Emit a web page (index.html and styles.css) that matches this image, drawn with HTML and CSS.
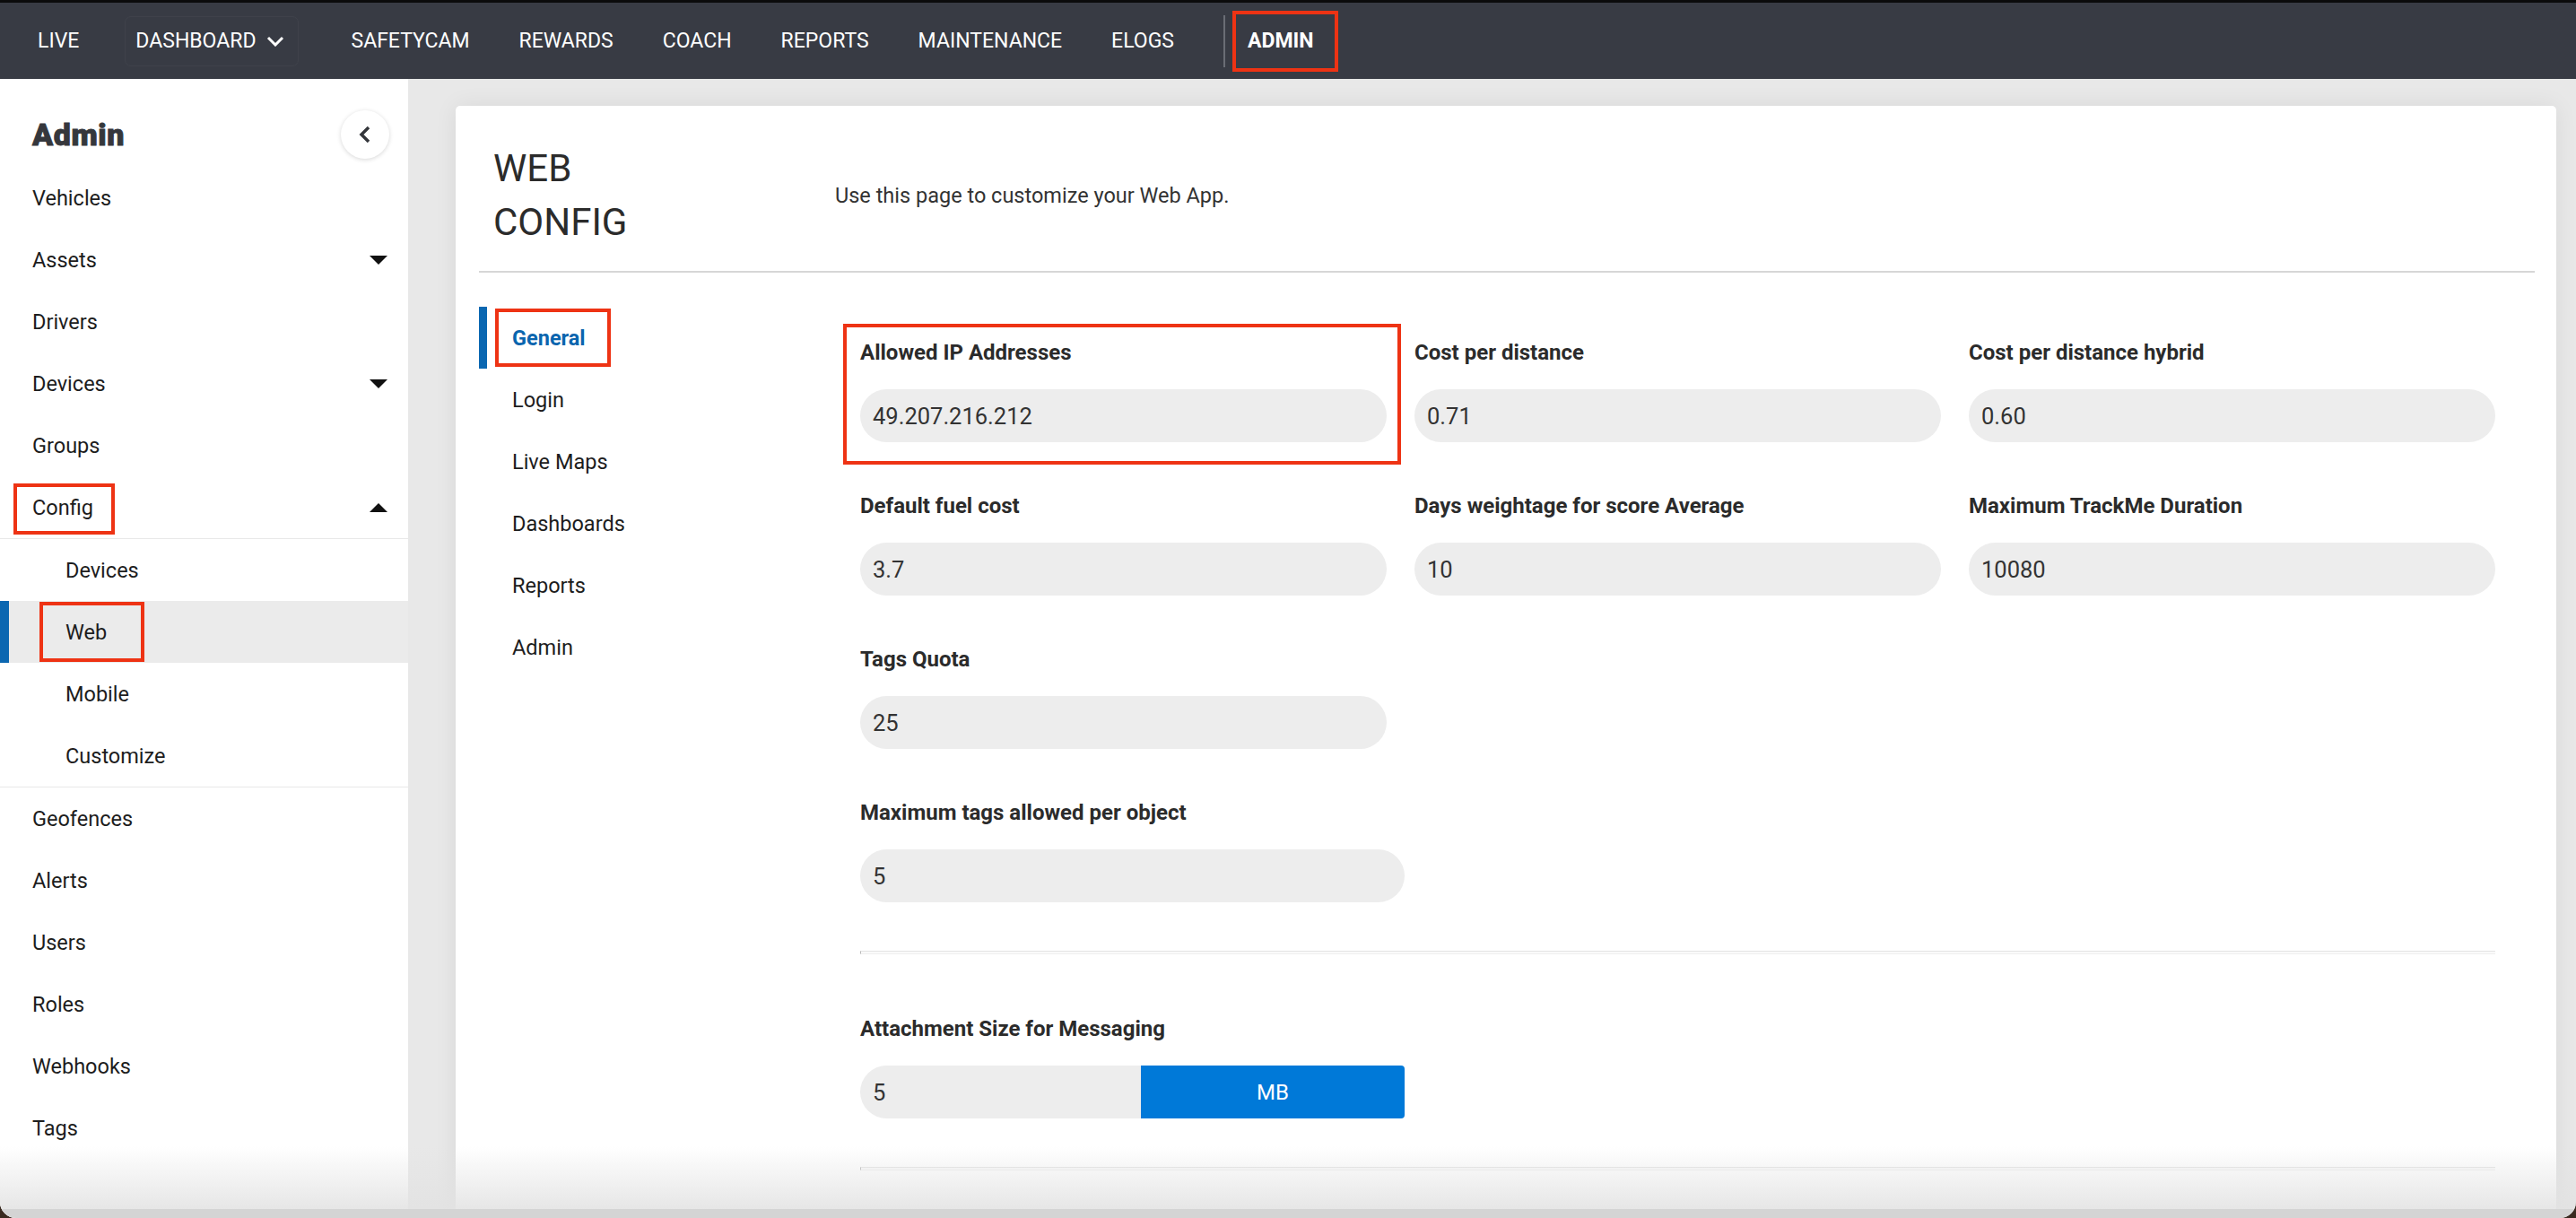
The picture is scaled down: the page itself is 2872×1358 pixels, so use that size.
FILE: index.html
```html
<!DOCTYPE html>
<html>

<head>
    <meta charset="utf-8">
    <title>Web Config</title>
    <link rel="stylesheet" href="styles.css">
</head>

<body>
    <div class="window">
        <header class="topnav">
            <a class="navItem">LIVE</a>
            <a class="navItem navDash">DASHBOARD
                <svg class="navChevron" viewBox="0 0 20 12" width="20" height="12"><path d="M2 2 L10 10 L18 2" /></svg>
            </a>
            <a class="navItem">SAFETYCAM</a>
            <a class="navItem">REWARDS</a>
            <a class="navItem">COACH</a>
            <a class="navItem">REPORTS</a>
            <a class="navItem">MAINTENANCE</a>
            <a class="navItem">ELOGS</a>
            <span class="navDivider"></span>
            <a class="navItem navActive">ADMIN</a>
        </header>

        <div class="layout">
            <aside class="sidebar">
                <div class="sideHead">
                    <h2>Admin</h2>
                    <button class="collapseBtn">
                        <svg viewBox="0 0 16 22" width="16" height="22"><path d="M12 3 L4 11 L12 19" /></svg>
                    </button>
                </div>
                <ul class="sideMenu">
                    <li class="sideItem">Vehicles</li>
                    <li class="sideItem">Assets <span class="caret"></span></li>
                    <li class="sideItem">Drivers</li>
                    <li class="sideItem">Devices <span class="caret"></span></li>
                    <li class="sideItem">Groups</li>
                    <li class="sideItem sideConfig">Config <span class="caret caretUp"></span></li>
                    <li>
                        <ul class="subMenu">
                            <li class="subItem">Devices</li>
                            <li class="subItem subActive">Web</li>
                            <li class="subItem">Mobile</li>
                            <li class="subItem">Customize</li>
                        </ul>
                    </li>
                    <li class="sideItem">Geofences</li>
                    <li class="sideItem">Alerts</li>
                    <li class="sideItem">Users</li>
                    <li class="sideItem">Roles</li>
                    <li class="sideItem">Webhooks</li>
                    <li class="sideItem">Tags</li>
                </ul>
            </aside>

            <main class="content">
                <section class="card">
                    <div class="cardHead">
                        <h1>WEB<br>CONFIG</h1>
                        <p>Use this page to customize your Web App.</p>
                    </div>
                    <div class="cardBody">
                        <nav class="tabs">
                            <div class="tab tabActive">General</div>
                            <div class="tab">Login</div>
                            <div class="tab">Live Maps</div>
                            <div class="tab">Dashboards</div>
                            <div class="tab">Reports</div>
                            <div class="tab">Admin</div>
                        </nav>
                        <form class="configForm">
                            <div class="fieldGrid">
                                <div class="field fieldMarked">
                                    <label>Allowed IP Addresses</label>
                                    <div class="input">49.207.216.212</div>
                                </div>
                                <div class="field">
                                    <label>Cost per distance</label>
                                    <div class="input">0.71</div>
                                </div>
                                <div class="field">
                                    <label>Cost per distance hybrid</label>
                                    <div class="input">0.60</div>
                                </div>
                                <div class="field">
                                    <label>Default fuel cost</label>
                                    <div class="input">3.7</div>
                                </div>
                                <div class="field">
                                    <label>Days weightage for score Average</label>
                                    <div class="input">10</div>
                                </div>
                                <div class="field">
                                    <label>Maximum TrackMe Duration</label>
                                    <div class="input">10080</div>
                                </div>
                                <div class="field">
                                    <label>Tags Quota</label>
                                    <div class="input">25</div>
                                </div>
                            </div>
                            <div class="field fieldWide">
                                <label>Maximum tags allowed per object</label>
                                <div class="input">5</div>
                            </div>
                            <hr class="divider">
                            <div class="field fieldWide fieldAfterRule">
                                <label>Attachment Size for Messaging</label>
                                <div class="inputGroup">
                                    <div class="input">5</div>
                                    <div class="unitBtn">MB</div>
                                </div>
                            </div>
                            <hr class="divider">
                        </form>
                    </div>
                </section>
            </main>
        </div>
        <div class="windowShade"></div>
    </div>
</body>

</html>
```

FILE: styles.css
```css
html {
    background: #3a2a20;
}

body {
    margin: 0;
    padding: 0;
    font-family: Roboto, "Liberation Sans", Arial, sans-serif;
    color: #1d1d1d;
}

.window {
    position: relative;
    height: 1358px;
    overflow: hidden;
    background: #e8e8e8;
    border-radius: 0 0 18px 18px;
}

/* top navigation */
.topnav {
    height: 85px;
    border-top: 3px solid #0b0b0c;
    background: #383b44;
    display: flex;
    align-items: center;
    gap: 55px;
    padding-left: 42px;
}

.navItem {
    position: relative;
    color: #fff;
    font-size: 23px;
    display: flex;
    align-items: center;
    gap: 12px;
}

.navDash {
    height: 54px;
    padding: 0 15px 0 11px;
    margin-left: -4px;
    margin-right: 3px;
    border: 1px solid rgba(255, 255, 255, 0.035);
    border-radius: 7px;
}

.navChevron path {
    fill: none;
    stroke: #fff;
    stroke-width: 3;
}

.navDivider {
    width: 2px;
    height: 58px;
    background: #6a6d75;
    margin-right: -30px;
}

.navActive {
    font-weight: 700;
}

.navActive::after {
    content: "";
    position: absolute;
    left: -17px;
    right: -28px;
    top: -20px;
    bottom: -21px;
    border: 4px solid #ee3314;
}

/* layout */
.layout {
    display: flex;
    height: 1270px;
}

.sidebar {
    width: 455px;
    flex: none;
    background: #fff;
}

.sideHead {
    height: 98px;
    box-sizing: border-box;
    padding: 26px 21px 0 36px;
    display: flex;
    align-items: center;
    justify-content: space-between;
}

.sideHead h2 {
    margin: 0;
    font-size: 34px;
    font-weight: 900;
    color: #35373c;
    -webkit-text-stroke: 0.9px #35373c;
    letter-spacing: 0.6px;
}

.collapseBtn {
    width: 54px;
    height: 54px;
    border-radius: 50%;
    border: none;
    background: #fff;
    box-shadow: 0 1px 5px rgba(0, 0, 0, 0.16);
    display: flex;
    align-items: center;
    justify-content: center;
    padding: 0;
}

.collapseBtn path {
    fill: none;
    stroke: #34363b;
    stroke-width: 3.5;
}

.sideMenu,
.subMenu {
    list-style: none;
    margin: 0;
    padding: 0;
}

.sideItem {
    position: relative;
    height: 69px;
    padding: 0 23px 0 36px;
    display: flex;
    align-items: center;
    justify-content: space-between;
    font-size: 23.5px;
}

.caret {
    width: 0;
    height: 0;
    border-left: 10px solid transparent;
    border-right: 10px solid transparent;
    border-top: 10px solid #111;
}

.caretUp {
    border-top: none;
    border-bottom: 10px solid #111;
}

.sideConfig::after {
    content: "";
    position: absolute;
    left: 15px;
    width: 113px;
    top: 8px;
    bottom: 4px;
    box-sizing: border-box;
    border: 4px solid #ee3314;
}

.subMenu {
    border-top: 1px solid #e8e8e8;
    border-bottom: 1px solid #e8e8e8;
}

.subItem {
    position: relative;
    height: 69px;
    padding-left: 73px;
    display: flex;
    align-items: center;
    font-size: 23.5px;
}

.subActive {
    background: #ebebeb;
    box-shadow: inset 10px 0 0 #0b67b1;
}

.subActive::after {
    content: "";
    position: absolute;
    left: 44px;
    width: 117px;
    top: 1px;
    bottom: 1px;
    box-sizing: border-box;
    border: 4px solid #ee3314;
}

/* main card */
.content {
    flex: 1;
    padding: 30px 22px 0 53px;
}

.card {
    height: 100%;
    background: #fff;
    border-radius: 5px;
    box-shadow: 0 0 26px rgba(0, 0, 0, 0.07);
    padding: 0 24px 0 26px;
}

.cardHead {
    display: flex;
    align-items: center;
    padding: 40px 0 24px 16px;
    border-bottom: 2px solid #d6d6d6;
}

.cardHead h1 {
    width: 381px;
    flex: none;
    margin: 0;
    font-size: 42px;
    line-height: 60px;
    font-weight: 400;
    color: #2b2b2b;
}

.cardHead p {
    margin: 0;
    font-size: 23.5px;
    color: #333;
}

.cardBody {
    display: flex;
    padding-top: 38px;
}

.tabs {
    width: 425px;
    flex: none;
}

.tab {
    position: relative;
    height: 69px;
    padding-left: 37px;
    display: flex;
    align-items: center;
    font-size: 23.5px;
}

.tabActive {
    color: #0a65ae;
    font-weight: 700;
    box-shadow: inset 9px 0 0 #0a67b1;
}

.tabActive::after {
    content: "";
    position: absolute;
    left: 18px;
    width: 129px;
    top: 2px;
    bottom: 2px;
    box-sizing: border-box;
    border: 4px solid #ee3314;
}

/* form */
.configForm {
    width: 1823px;
    padding-top: 36px;
}

.fieldGrid {
    display: grid;
    grid-template-columns: repeat(3, 587px);
    column-gap: 31px;
    row-gap: 56px;
}

.field {
    position: relative;
}

.field label {
    display: block;
    font-size: 24px;
    line-height: 30px;
    font-weight: 700;
    color: #2b2b2b;
    margin-bottom: 26px;
}

.input {
    height: 59px;
    box-sizing: border-box;
    border-radius: 30px;
    background: #ededed;
    padding-left: 14px;
    display: flex;
    align-items: center;
    font-size: 25.5px;
    color: #333;
}

.fieldMarked::after {
    content: "";
    position: absolute;
    left: -19px;
    right: -16px;
    top: -17px;
    bottom: -25px;
    border: 4px solid #ee3314;
}

.fieldWide {
    width: 607px;
    margin-top: 56px;
}

.fieldAfterRule {
    margin-top: 68px;
}

.divider {
    margin: 54px 0 0;
    height: 2px;
    border: none;
    border-top: 1px solid #e4e4e4;
    border-bottom: 1px solid #efefef;
    border-left: 1px solid #b9b9b9;
    background: #fafafa;
}

.inputGroup {
    display: flex;
}

.inputGroup .input {
    width: 313px;
    border-radius: 30px 0 0 30px;
}

.unitBtn {
    flex: 1;
    height: 59px;
    background: #0079d8;
    border-radius: 0 4px 4px 0;
    color: #fff;
    font-size: 24px;
    display: flex;
    align-items: center;
    justify-content: center;
}

/* screen edge shading at the bottom of the window */
.windowShade {
    position: absolute;
    left: 0;
    right: 0;
    bottom: 0;
    height: 80px;
    pointer-events: none;
    background: linear-gradient(to bottom, rgba(232, 232, 232, 0) 0, rgba(226, 226, 226, 0.85) 70px, #d4d4d4 70px, #d4d4d4 100%);
}
```
